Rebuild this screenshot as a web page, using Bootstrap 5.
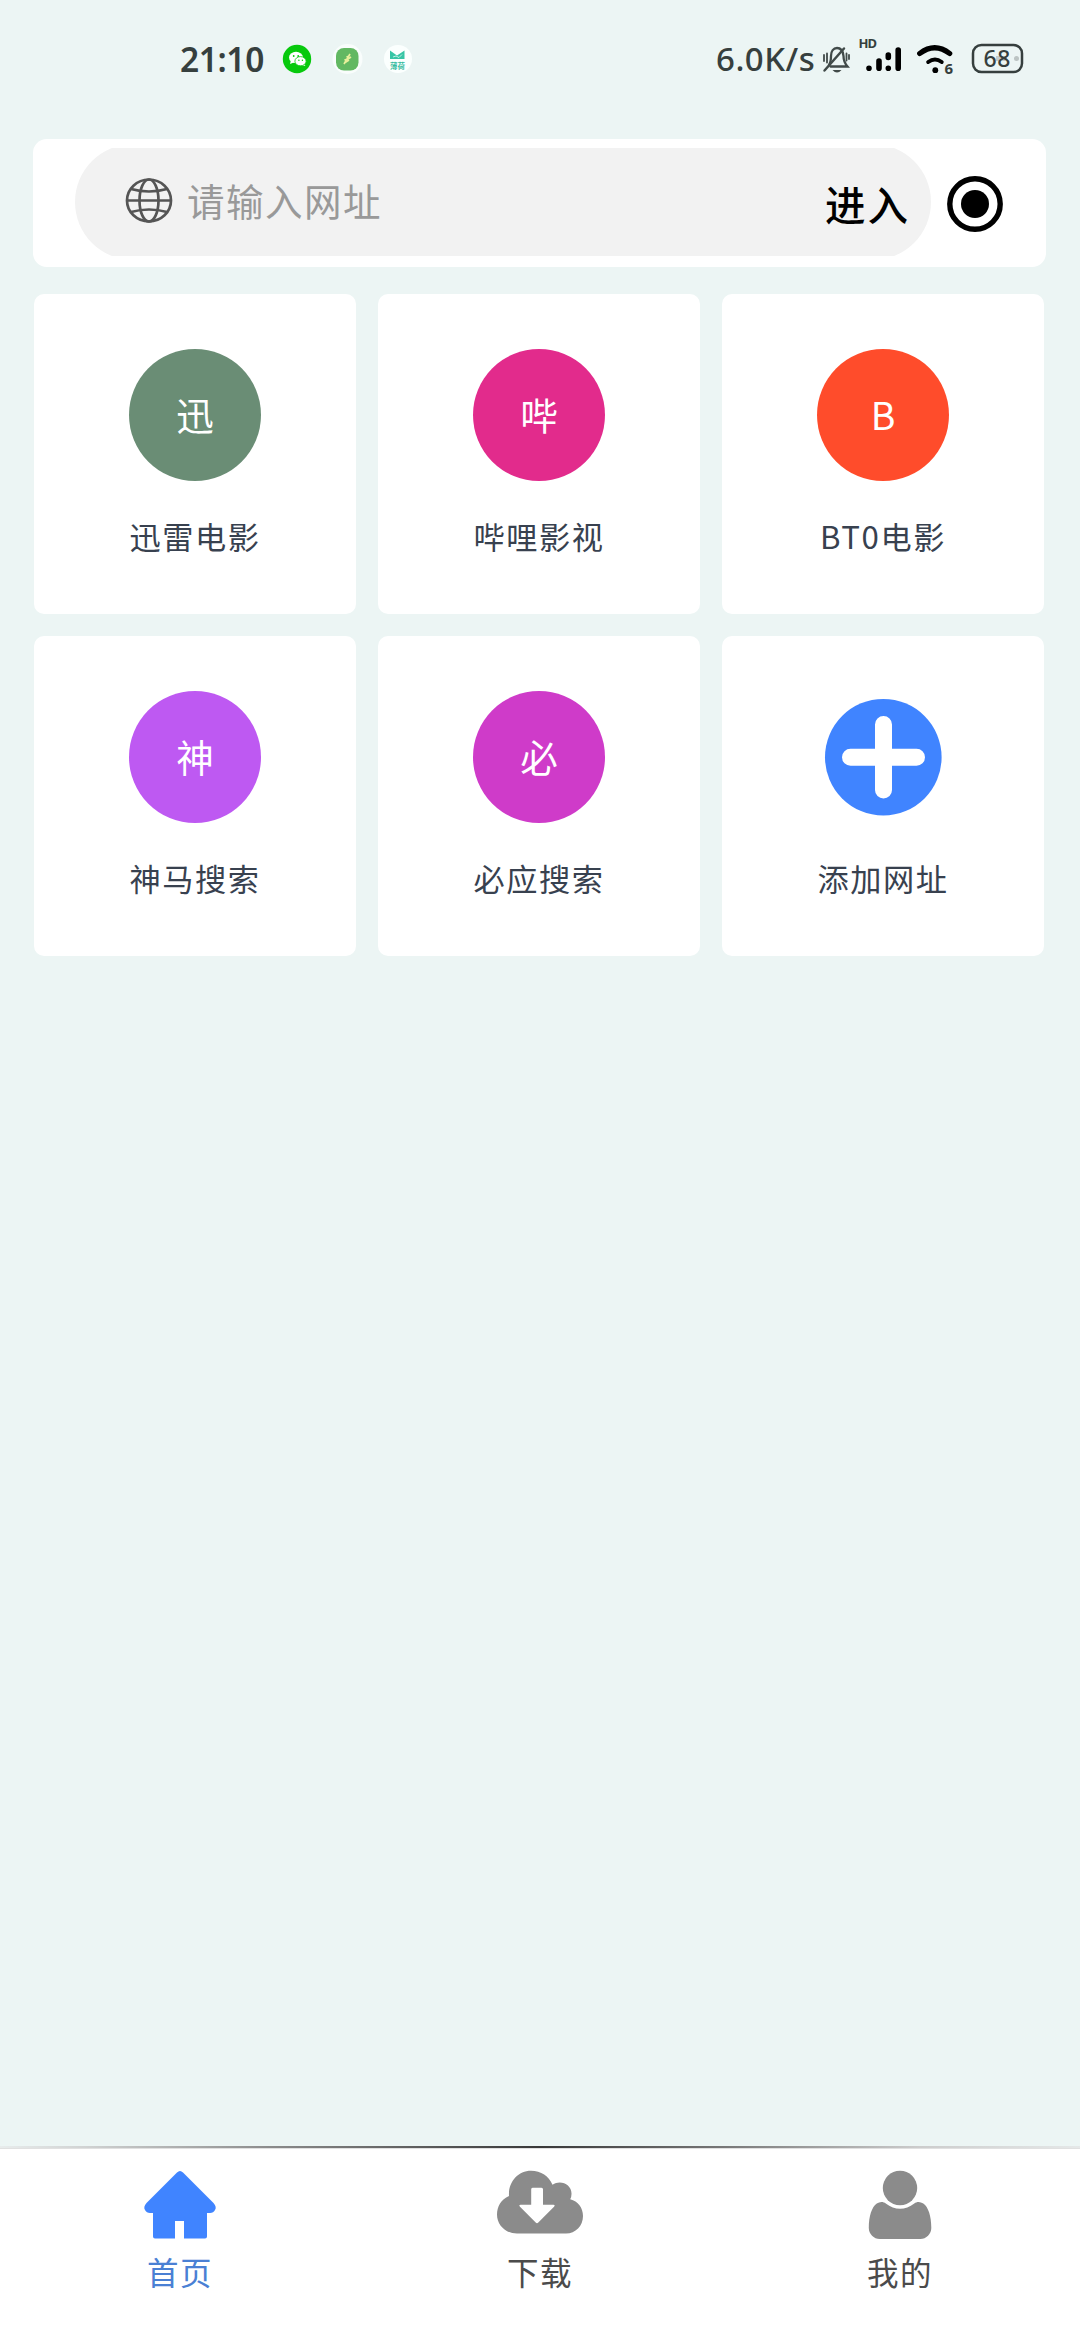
<!DOCTYPE html>
<html lang="zh-CN">
<head>
<meta charset="utf-8">
<meta name="viewport" content="width=device-width, initial-scale=1">
<title>首页</title>
<link rel="stylesheet" href="https://cdn.jsdelivr.net/npm/bootstrap@5.3.0/dist/css/bootstrap.min.css">
<style>
  body { background: #ecf5f4; font-family: "Noto Sans CJK SC", "Noto Sans", sans-serif; }
  .screen { width: 1080px; height: 2340px; overflow: hidden; }
  .status { height: 139px; padding: 0 56px 0 180px; color: #363f3e; }
  .status-row { height: 118px; }
  .status svg { display: block; flex: none; }
  .clock { font: 600 33.5px/40px "Noto Sans", sans-serif; letter-spacing: -.4px; width: 84px; white-space: nowrap; }
  .speed { font: 500 33px/40px "Noto Sans", sans-serif; letter-spacing: .5px; width: 98px; white-space: nowrap; }
  .search { margin: 0 34px 0 33px; height: 128px; border-radius: 14px; padding: 9px 43px 11px 42px; }
  .pill { width: 856px; height: 116px; margin: -4px 0; background: #f2f2f2; border-radius: 58px; clip-path: inset(4px 0); padding: 0 21px 0 49px; }
  .hint { font-size: 37.5px; line-height: 50px; letter-spacing: 1.5px; color: #999; margin: -4px 0 0 14px; }
  .enter { font-size: 40.5px; line-height: 50px; font-weight: 500; letter-spacing: 2px; color: #000; padding-top: 3px; white-space: nowrap; }
  .record { margin-top: 3px; }
  .tiles { display: grid; grid-template-columns: repeat(3, 322px); gap: 22px; padding: 27px 34px 0; }
  .tile { height: 320px; border-radius: 10px; padding-top: 55px; }
  .dot { width: 132px; height: 132px; color: #fff; font-size: 37.5px; line-height: 50px; padding-bottom: 2px; }
  .tile-name { margin-top: 35px; font-size: 31.2px; line-height: 40px; letter-spacing: 1.6px; color: #38414f; }
  .tabs { height: 191px; }
  .tab-rule { height: 3px; background: linear-gradient(90deg, #e8ecec 0, #d0d2d2 8%, #8b8b8b 25%, #383838 50%, #777 67%, #ccc 85%, #e5e8e8 100%) 0 0 / 100% 2px no-repeat, #e0e0e0; }
  .tab { padding-top: 20px; color: #4b4b4b; font-size: 31.5px; line-height: 40px; letter-spacing: 1.5px; text-decoration: none; }
  .tab.on { color: #4a80d4; }
  .tab svg { display: block; margin-bottom: 12px; }
</style>
<script src="https://cdn.jsdelivr.net/npm/bootstrap@5.3.0/dist/js/bootstrap.bundle.min.js"></script>
</head>
<body>
<div class="screen d-flex flex-column">
  <header class="status">
    <div class="status-row d-flex align-items-center justify-content-between">
      <div class="d-flex align-items-center">
        <span class="clock">21:10</span>
        <svg class="ms-3" width="136" height="36" viewBox="280 41 136 36">
          <circle cx="297" cy="59" r="14.2" fill="#07c90d"/>
          <g fill="#fff">
            <path d="M290 64l1-4 4 2z"/><ellipse cx="296" cy="57.5" rx="7" ry="5.7"/>
            <path d="M303 63l2.5 3-5-1z"/><ellipse cx="300.5" cy="61.2" rx="5.6" ry="4.6" stroke="#07c90d" stroke-width=".8"/>
          </g>
          <g fill="#07c90d"><circle cx="293.7" cy="56" r=".9"/><circle cx="298.2" cy="56" r=".9"/><circle cx="298.9" cy="60.3" r=".7"/><circle cx="302.4" cy="60.3" r=".7"/></g>
          <circle cx="347.5" cy="59" r="15" fill="#f9fdfc"/>
          <rect x="336" y="48" width="22.5" height="22.5" rx="8" fill="#62b862"/>
          <path d="M344 64l6-10M345 59l1 3 3-2M347 56l1 3 3-2" fill="none" stroke="#e7ef9b" stroke-width="1.7"/>
          <circle cx="398" cy="59" r="14" fill="#fbfffe"/>
          <path d="M390 50.500l7 5 7.500-5V59H390z" fill="#36c5a5"/><path d="M393 57l3-1 3 1.500 3-3" stroke="#bff0e4" fill="none"/>
          <text x="390" y="68.500" font-size="8" textLength="15" lengthAdjust="spacingAndGlyphs" fill="#36bca0" font-weight="700" font-family="Noto Sans CJK SC, sans-serif">薄荷</text>
        </svg>
      </div>
      <div class="d-flex align-items-center">
        <span class="speed">6.0K/s</span>
        <svg width="210" height="48" viewBox="814 35 210 48">
          <g fill="none" stroke="#414a49" stroke-width="2.300" stroke-linecap="round">
            <path d="M829 65c2-3 2-6 2-9 0-5 2.500-8 6-8s6 3 6.500 8c0 4 1 7 4 10.500h-17"/>
            <path d="M824.500 70.500L844 48.500" stroke-width="2.500"/>
            <path d="M824 55v6M827 53.500v9M846.500 53.500v7M849 55v4" stroke-width="1.800"/>
          </g>
          <path d="M832.500 70h9q-4.500 5-9 0" fill="#414a49"/>
          <text x="858.500" y="48" font-family="Noto Sans, sans-serif" font-weight="700" font-size="13" textLength="18.500" fill="#363f3e">HD</text>
          <g stroke="#000" stroke-width="5.600" stroke-linecap="round"><path d="M869 68.200v.1M879 61v7.300M888.300 55v2.500M888.300 68.200v.1M898.200 50v18.300"/></g>
          <g fill="none" stroke="#000" stroke-linecap="round" stroke-width="5.200"><path d="M919.700 53.500q15-11.500 30 0"/><path d="M928.200 62q6.800-5 13.500 0" stroke-width="4"/></g>
          <circle cx="935.300" cy="70.200" r="2.900"/>
          <text x="944.500" y="73.500" font-family="Noto Sans, sans-serif" font-weight="700" font-size="15" fill="#363f3e">6</text>
          <rect x="973" y="45" width="49" height="27" rx="8.500" fill="none" stroke="#363f3e" stroke-width="2.500"/>
          <path d="M996 56h11v5h-11z" fill="#c5caca"/><circle cx="1016.500" cy="58.500" r="2.500" fill="#bcc4c3"/>
          <text x="983.500" y="66.500" font-family="Noto Sans, sans-serif" font-weight="500" font-size="23" textLength="27" fill="#363f3e">68</text>
        </svg>
      </div>
    </div>
  </header>

  <div class="search bg-white d-flex align-items-center justify-content-between">
    <div class="pill d-flex align-items-center justify-content-between">
      <div class="d-flex align-items-center">
        <svg width="49" height="48" viewBox="0 0 49 48" fill="none" stroke="#555" stroke-width="2.700">
          <ellipse cx="25" cy="22.500" rx="22" ry="21"/><ellipse cx="25" cy="22.500" rx="9.500" ry="21"/>
          <path d="M3 22.500h44M7 11q18 5 36 0M7 34q18-5 36 0"/>
        </svg>
        <span class="hint">请输入网址</span>
      </div>
      <span class="enter">进入</span>
    </div>
    <svg class="record flex-shrink-0" width="56" height="56" viewBox="0 0 56 56"><circle cx="28" cy="28" r="25.200" fill="none" stroke="#000" stroke-width="5.400"/><circle cx="28" cy="28" r="14"/></svg>
  </div>

  <main class="tiles">
    <div class="tile bg-white d-flex flex-column align-items-center"><div class="dot rounded-circle d-flex align-items-center justify-content-center" style="background:#6a8d75">迅</div><div class="tile-name">迅雷电影</div></div>
    <div class="tile bg-white d-flex flex-column align-items-center"><div class="dot rounded-circle d-flex align-items-center justify-content-center" style="background:#e22b8c">哔</div><div class="tile-name">哔哩影视</div></div>
    <div class="tile bg-white d-flex flex-column align-items-center"><div class="dot rounded-circle d-flex align-items-center justify-content-center" style="background:#ff4c2b">B</div><div class="tile-name">BT0电影</div></div>
    <div class="tile bg-white d-flex flex-column align-items-center"><div class="dot rounded-circle d-flex align-items-center justify-content-center" style="background:#be59f2">神</div><div class="tile-name">神马搜索</div></div>
    <div class="tile bg-white d-flex flex-column align-items-center"><div class="dot rounded-circle d-flex align-items-center justify-content-center" style="background:#cf3bc9">必</div><div class="tile-name">必应搜索</div></div>
    <div class="tile bg-white d-flex flex-column align-items-center">
      <svg class="flex-shrink-0" width="132" height="132" viewBox="0 0 132 132"><circle cx="66.300" cy="66.200" r="58.300" fill="#4084ff"/><path d="M66.500 33.500v65.500M33.500 66.200h66" stroke="#fff" stroke-width="17" stroke-linecap="round"/></svg>
      <div class="tile-name">添加网址</div>
    </div>
  </main>

  <div class="tab-rule mt-auto flex-shrink-0"></div>
  <nav class="tabs bg-white row g-0 flex-shrink-0">
    <a class="tab on col d-flex flex-column align-items-center">
      <svg width="88" height="70" viewBox="0 0 88 70" fill="#4084ff"><path d="M41 3.500q3-3 6 0L77.500 34q3.500 4 1.500 7-1.500 3-5 3h-3v23.500q0 2-2 2H48V52h-9v17.500H19q-2 0-2-2V44h-3q-3.500 0-5-3-2-3 1.500-7z"/></svg>
      <span>首页</span>
    </a>
    <a class="tab col d-flex flex-column align-items-center">
      <svg width="88" height="70" viewBox="0 0 88 70"><path d="M21 64.500C9 64.500 1 55.500 1 45.500c0-8 4-15 12-18.500C12 13 22 1.700 35 1.700c10 0 18 5.300 21.500 14C65 10 76 16 75.500 25q0 3-1.300 5.300C82 32 87 39 87 47c0 10-7.500 17.500-17 17.500z" fill="#8b8b8b"/><path d="M36.500 18.800h9q1.500 0 1.500 1.500v15.500h10.500q2 0 .5 2L42.300 53.500q-1.300 1.500-2.600 0L24 37.800q-1.500-2 .5-2h10.700V20.300q0-1.500 1.300-1.500" fill="#fff"/></svg>
      <span>下载</span>
    </a>
    <a class="tab col d-flex flex-column align-items-center">
      <svg width="88" height="70" viewBox="0 0 88 70" fill="#8b8b8b"><circle cx="44" cy="19" r="17.200"/><path d="M12.800 59c0-12 3-21 8-24.500 3-2 6.500-2 9 0 9 7 19.500 7 28.500 0 2.500-2 6-2 9 0 5 3.500 8 12.500 8 24.500 0 6-5 11-11 11h-40.500c-6 0-11-5-11-11"/></svg>
      <span>我的</span>
    </a>
  </nav>
</div>
</body>
</html>
